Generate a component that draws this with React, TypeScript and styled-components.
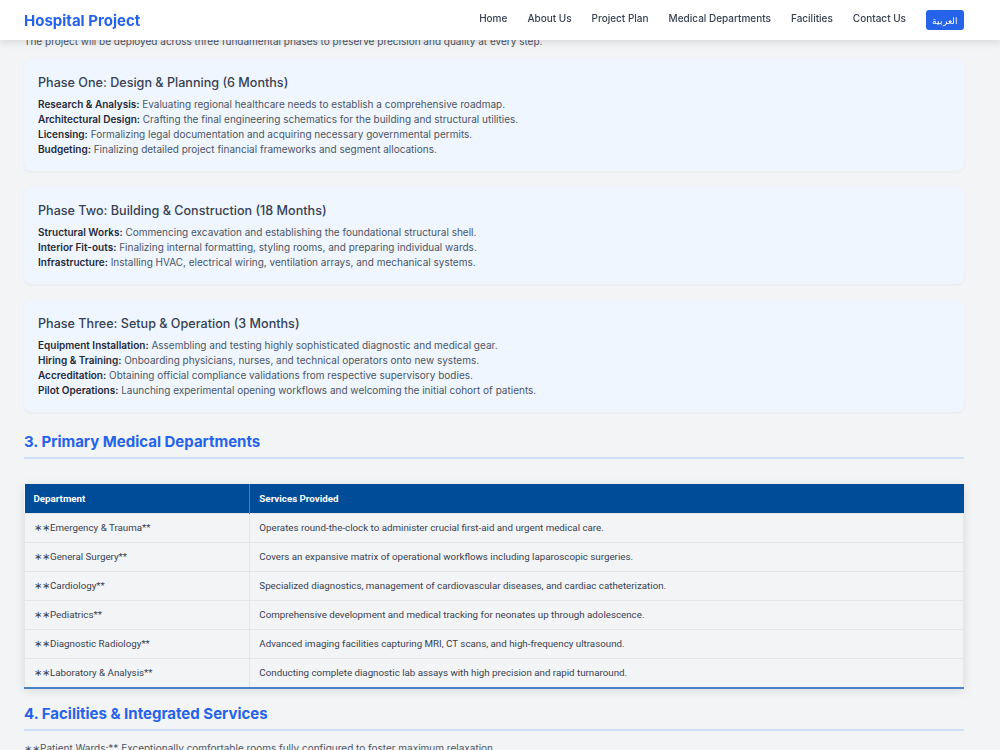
import styled, { createGlobalStyle } from "styled-components";

const GlobalStyle = createGlobalStyle`
  * { box-sizing: border-box; }
  body {
    margin: 0;
    background: #f3f4f6;
    font-family: Inter, "Noto Sans", sans-serif;
    color: #4b5563;
  }
`;

const Header = styled.header`
  position: fixed;
  top: 0;
  left: 0;
  right: 0;
  height: 40px;
  background: #ffffff;
  box-shadow: 0 2px 8px rgba(0, 0, 0, 0.12);
  display: flex;
  align-items: center;
  justify-content: space-between;
  padding: 0 36px 0 24px;
  z-index: 10;
`;

const Logo = styled.div`
  font-size: 15px;
  font-weight: 700;
  color: #2563eb;
`;

const Nav = styled.nav`
  display: flex;
  align-items: center;
  gap: 20px;
`;

const NavLink = styled.a`
  font-size: 10px;
  font-weight: 500;
  color: #374151;
  text-decoration: none;
  margin-bottom: 5px;
`;

const LangButton = styled.button`
  background: #2563eb;
  color: #fff;
  border: none;
  border-radius: 3px;
  height: 20px;
  padding: 0 6px;
  font-size: 9px;
  font-family: "Noto Sans", Inter, sans-serif;
`;

const Main = styled.main`
  padding: 34px 36px 40px 24px;
`;

const Intro = styled.p`
  margin: 0 0 10px;
  font-size: 10px;
  line-height: 15px;
`;

const PhaseList = styled.div`
  display: flex;
  flex-direction: column;
  gap: 16px;
`;

const PhaseCard = styled.section`
  background: #eff6ff;
  border-radius: 7px;
  padding: 15px 14px 14px;
  box-shadow: 0 1px 3px rgba(0, 0, 0, 0.05);
`;

const PhaseTitle = styled.h3`
  margin: 0 0 5px;
  font-size: 12.6px;
  line-height: 18px;
  font-weight: 500;
  color: #374151;
`;

const PhaseItem = styled.div`
  font-size: 10px;
  line-height: 15px;
  color: #4b5563;

  b {
    font-weight: 600;
    color: #1f2937;
  }
`;

const SectionTitle = styled.h2<{ $top: number }>`
  margin: ${(p) => p.$top}px 0 0;
  padding-bottom: 5px;
  font-size: 15px;
  line-height: 20px;
  font-weight: 700;
  color: #2563eb;
  border-bottom: 2px solid #cfe0fb;
`;

const TableWrap = styled.div`
  margin-top: 25px;
  box-shadow: 0 2px 10px rgba(0, 0, 0, 0.1);
  border-bottom: 2px solid #4a82c8;
`;

const Table = styled.table`
  width: 100%;
  border-collapse: collapse;
  font-family: Roboto, "Noto Sans", sans-serif;
  font-size: 9.75px;
`;

const HeadCell = styled.th`
  background: #004c99;
  color: #ffffff;
  font-weight: 700;
  text-align: left;
  height: 29px;
  padding: 0 9px;
  border-left: 1px solid #4d7fbd;
  &:first-child { border-left: none; width: 24%; }
`;

const Cell = styled.td`
  background: #f3f4f6;
  color: #374151;
  height: 29px;
  padding: 0 9px;
  border-top: 1px solid #e3e5e9;
  border-left: 1px solid #e3e5e9;
  &:last-child { border-right: 1px solid #e3e5e9; }
`;

const Para = styled.p`
  margin: 10px 0 0;
  font-size: 10px;
  line-height: 15px;
`;

const phases = [
  {
    title: "Phase One: Design & Planning (6 Months)",
    items: [
      ["Research & Analysis:", "Evaluating regional healthcare needs to establish a comprehensive roadmap."],
      ["Architectural Design:", "Crafting the final engineering schematics for the building and structural utilities."],
      ["Licensing:", "Formalizing legal documentation and acquiring necessary governmental permits."],
      ["Budgeting:", "Finalizing detailed project financial frameworks and segment allocations."],
    ],
  },
  {
    title: "Phase Two: Building & Construction (18 Months)",
    items: [
      ["Structural Works:", "Commencing excavation and establishing the foundational structural shell."],
      ["Interior Fit-outs:", "Finalizing internal formatting, styling rooms, and preparing individual wards."],
      ["Infrastructure:", "Installing HVAC, electrical wiring, ventilation arrays, and mechanical systems."],
    ],
  },
  {
    title: "Phase Three: Setup & Operation (3 Months)",
    items: [
      ["Equipment Installation:", "Assembling and testing highly sophisticated diagnostic and medical gear."],
      ["Hiring & Training:", "Onboarding physicians, nurses, and technical operators onto new systems."],
      ["Accreditation:", "Obtaining official compliance validations from respective supervisory bodies."],
      ["Pilot Operations:", "Launching experimental opening workflows and welcoming the initial cohort of patients."],
    ],
  },
];

const departments = [
  ["Emergency & Trauma", "Operates round-the-clock to administer crucial first-aid and urgent medical care."],
  ["General Surgery", "Covers an expansive matrix of operational workflows including laparoscopic surgeries."],
  ["Cardiology", "Specialized diagnostics, management of cardiovascular diseases, and cardiac catheterization."],
  ["Pediatrics", "Comprehensive development and medical tracking for neonates up through adolescence."],
  ["Diagnostic Radiology", "Advanced imaging facilities capturing MRI, CT scans, and high-frequency ultrasound."],
  ["Laboratory & Analysis", "Conducting complete diagnostic lab assays with high precision and rapid turnaround."],
];

const navItems = ["Home", "About Us", "Project Plan", "Medical Departments", "Facilities", "Contact Us"];

export default function App() {
  return (
    <>
      <GlobalStyle />
      <Header>
        <Logo>Hospital Project</Logo>
        <Nav>
          {navItems.map((n) => (
            <NavLink key={n} href="#">
              {n}
            </NavLink>
          ))}
          <LangButton>العربية</LangButton>
        </Nav>
      </Header>
      <Main>
        <Intro>
          The project will be deployed across three fundamental phases to preserve precision and quality at every step.
        </Intro>
        <PhaseList>
          {phases.map((p) => (
            <PhaseCard key={p.title}>
              <PhaseTitle>{p.title}</PhaseTitle>
              {p.items.map(([label, text]) => (
                <PhaseItem key={label}>
                  <b>{label}</b> {text}
                </PhaseItem>
              ))}
            </PhaseCard>
          ))}
        </PhaseList>

        <SectionTitle $top={20}>3. Primary Medical Departments</SectionTitle>
        <TableWrap>
          <Table>
            <thead>
              <tr>
                <HeadCell>Department</HeadCell>
                <HeadCell>Services Provided</HeadCell>
              </tr>
            </thead>
            <tbody>
              {departments.map(([name, desc]) => (
                <tr key={name}>
                  <Cell>∗∗{name}**</Cell>
                  <Cell>{desc}</Cell>
                </tr>
              ))}
            </tbody>
          </Table>
        </TableWrap>

        <SectionTitle $top={15}>4. Facilities & Integrated Services</SectionTitle>
        <Para>∗∗Patient Wards:** Exceptionally comfortable rooms fully configured to foster maximum relaxation.</Para>
      </Main>
    </>
  );
}
